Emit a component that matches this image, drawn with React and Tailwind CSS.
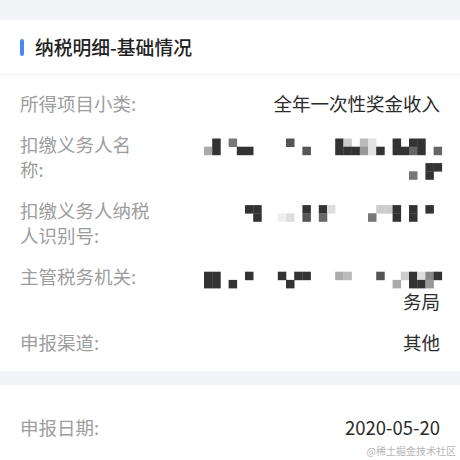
import React from 'react';

// pixelated (mosaic) values, cells are [col, row, colour] on an 8.2px grid starting at (204, 141)
const CELL = 8.2;

const nameCells = [
    [0, 1, '#aaa'], [1, 0, '#333'], [1, 1, '#333'], [3, 0, '#777'], [4, 1, '#333'], [5, 1, '#333'],
    [10, 0, '#555'], [12, 1, '#555'],
    [16, 0, '#333'], [16, 1, '#333'], [17, 0, '#ccc'], [17, 1, '#333'], [18, 1, '#333'],
    [19, 0, '#bbb'], [19, 1, '#999'], [20, 0, '#e2e2e2'], [20, 1, '#e2e2e2'], [21, 1, '#333'],
    [23, 0, '#333'], [23, 1, '#333'], [24, 1, '#333'], [25, 0, '#333'], [25, 1, '#666'],
    [26, 0, '#333'], [26, 1, '#333'], [28, 1, '#666'],
    [27, 3, '#333'], [28, 3, '#333'], [25, 4, '#777'], [27, 4, '#333'],
];

const idCells = [
    [5, 8, '#333'], [6, 8, '#333'], [6, 9, '#333'], [9, 9, '#eee'], [10, 9, '#ddd'],
    [12, 8, '#333'], [12, 9, '#555'], [14, 8, '#333'], [14, 9, '#666'], [15, 8, '#ddd'],
    [20, 9, '#777'], [21, 8, '#ccc'], [22, 8, '#ccc'], [23, 8, '#333'], [23, 9, '#333'],
    [25, 8, '#333'], [25, 9, '#333'], [27, 8, '#333'],
];

const officeCells = [
    [0, 16, '#333'], [1, 16, '#333'], [0, 17, '#333'], [1, 17, '#333'], [3, 17, '#333'], [5, 16, '#333'],
    [9, 16, '#333'], [10, 17, '#333'], [11, 16, '#333'], [12, 16, '#333'],
    [16, 16, '#aaa'], [17, 16, '#bbb'], [21, 16, '#555'],
    [23, 17, '#aaa'], [24, 16, '#ccc'], [25, 16, '#333'], [25, 17, '#333'], [26, 16, '#ddd'],
    [26, 17, '#333'], [27, 16, '#888'], [27, 17, '#999'], [28, 16, '#333'],
];

const Mosaic = ({ cells, top, height }) => (
    <svg
        width="250"
        height={height}
        viewBox={`190 ${top} 250 ${height}`}
        className="block ml-auto overflow-visible"
    >
        {cells.map(([c, r, fill], i) => (
            <rect key={i} x={204 + c * CELL} y={141 + r * CELL} width={CELL + 0.3} height={CELL + 0.3} fill={fill} />
        ))}
    </svg>
);

const Row = ({ label, children }) => (
    <div className="flex px-5 py-2 text-[18.5px] leading-[25px]">
        <div className="w-[131px] shrink-0 text-[#9d9d9d]">{label}</div>
        <div className="flex-1 text-right text-[#2b2b2b]">{children}</div>
    </div>
);

export default function App() {
    return (
        <div className="relative w-[460px] h-[460px] overflow-hidden bg-[#f3f4f8] font-['Noto_Sans_CJK_SC',sans-serif]">
            <div className="h-5" />

            <div className="bg-white">
                <div className="h-[55px] flex items-center gap-[11px] px-5 border-b border-[#f1f1f1]">
                    <div className="w-1 h-[17px] rounded-full bg-[#4a89f5]" />
                    <h3 className="text-[18.8px] font-medium text-[#222] pt-px">纳税明细-基础情况</h3>
                </div>

                <div className="py-2">
                    <Row label="所得项目小类:">全年一次性奖金收入</Row>
                    <Row label="扣缴义务人名称:">
                        <Mosaic cells={nameCells} top={134.5} height={50} />
                    </Row>
                    <Row label="扣缴义务人纳税人识别号:">
                        <Mosaic cells={idCells} top={199.5} height={25} />
                    </Row>
                    <Row label="主管税务机关:">
                        <Mosaic cells={officeCells} top={264.5} height={25} />
                        <div>务局</div>
                    </Row>
                    <Row label="申报渠道:">其他</Row>
                </div>
            </div>

            <div className="h-[14px]" />

            <div className="bg-white pt-[22px] h-full">
                <Row label="申报日期:">2020-05-20</Row>
                <div className="pt-[3px]">
                    <Row label="纳税所属期:">2020-01-01</Row>
                </div>
            </div>

            <div className="absolute right-[4px] bottom-[2px] text-[10px] leading-[14px] text-[#b5b5b5]">
                @稀土掘金技术社区
            </div>
        </div>
    );
}
